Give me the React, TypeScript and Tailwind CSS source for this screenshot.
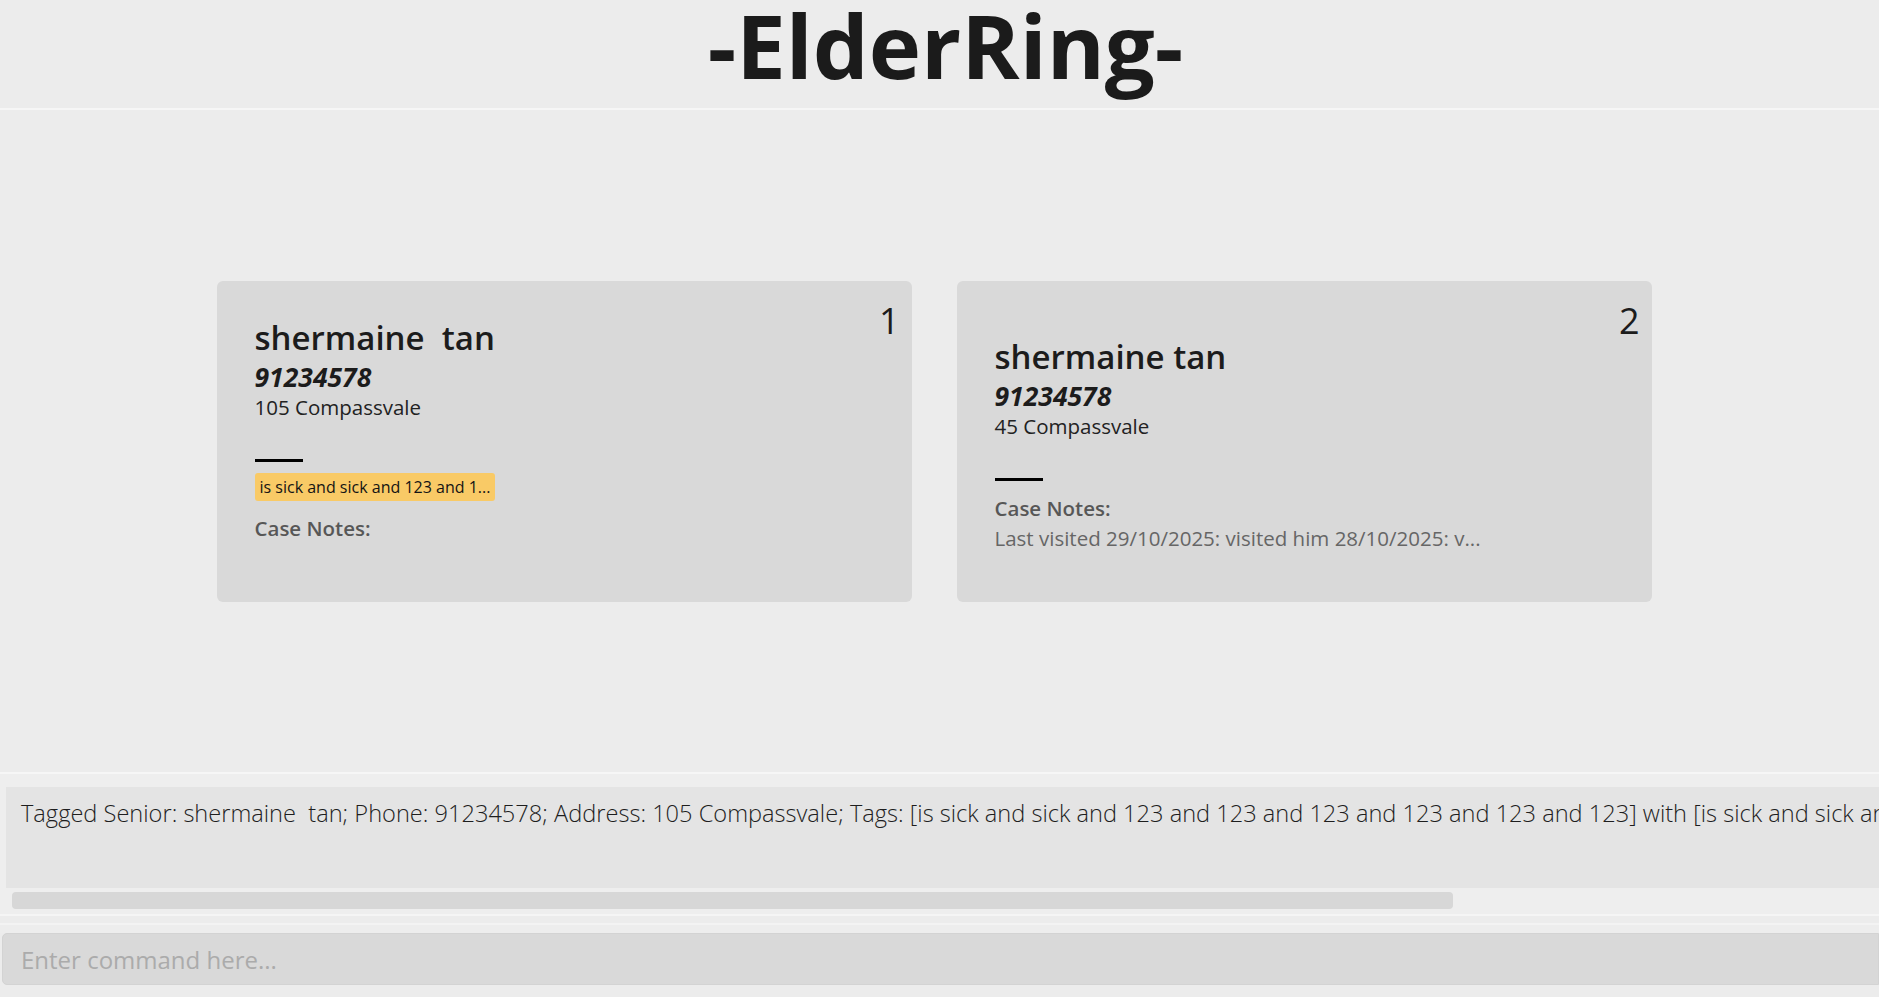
import React from "react";

type Person = {
  id: number;
  name: string;
  phone: string;
  address: string;
  tag?: string;
  note?: string;
};

const people: Person[] = [
  { id: 1, name: "shermaine  tan", phone: "91234578", address: "105 Compassvale", tag: "is sick and sick and 123 and 1..." },
  { id: 2, name: "shermaine tan", phone: "91234578", address: "45 Compassvale", note: "Last visited 29/10/2025: visited him 28/10/2025: v..." },
];

function Card({ p }: { p: Person }) {
  return (
    <div className="flex h-[321px] w-[695px] shrink-0 rounded-[6px] bg-[#d9d9d9] pl-[38px] pr-[12px]">
      <div className="flex flex-1 flex-col justify-center pt-[8px]">
        <div className="whitespace-pre text-[33px] font-semibold leading-[42px] text-[#1c1c1c]">{p.name}</div>
        <div className="text-[26.5px] font-bold italic leading-[37px] text-[#1c1c1c]">{p.phone}</div>
        <div className="text-[20.5px] leading-[23px] text-[#222222]">{p.address}</div>
        <div className="mt-[40px] h-[3px] w-[48px] bg-black" />
        {p.tag && (
          <div className="mt-[11px] flex">
            <div className="flex h-[28px] items-center rounded-[3px] bg-[#f9ca66] px-[5px] text-[16px] leading-[20px] text-[#141414]">
              {p.tag}
            </div>
          </div>
        )}
        <div className="mt-[13px] text-[20.5px] font-semibold leading-[28px] text-[#575757]">Case Notes:</div>
        <div className="h-[32px] whitespace-nowrap text-[20.5px] leading-[32px] text-[#666666]">{p.note ?? ""}</div>
      </div>
      <div className="pt-[22px] text-[36px] leading-none text-[#1c1c1c]">{p.id}</div>
    </div>
  );
}

export default function App() {
  const result =
    "Tagged Senior: shermaine  tan; Phone: 91234578; Address: 105 Compassvale; Tags: [is sick and sick and 123 and 123 and 123 and 123 and 123 and 123] with [is sick and sick and 123 and 123 and 123 and 123 and 123 and 123]";
  return (
    <div className="flex h-screen w-full flex-col overflow-hidden bg-[#ececec] font-['Open_Sans',sans-serif]">
      <div className="flex h-[108px] shrink-0 justify-center pl-[12px]">
        <h1 className="text-[88.5px] font-bold leading-[90px] text-[#1b1b1b]">-ElderRing-</h1>
      </div>
      <div className="h-[2px] shrink-0 bg-[#f6f6f6]" />
      <div className="flex flex-1 items-center justify-center gap-[45px] pr-[11px]">
        {people.map((p) => (
          <Card key={p.id} p={p} />
        ))}
      </div>
      <div className="h-[2px] shrink-0 bg-[#f6f6f6]" />
      <div className="h-[140px] shrink-0 bg-[#eeeeee] pl-[6px] pt-[13px]">
        <div className="h-[101px] overflow-hidden bg-[#e4e4e4] pl-[15px] pt-[10px]">
          <div className="whitespace-pre text-[23.6px] font-light leading-[32px] text-[#1e1e1e]">{result}</div>
        </div>
        <div className="h-[26px] pt-[4px]">
          <div className="ml-[6px] h-[17px] w-[1441px] rounded-[4px] bg-[#d7d7d7]" />
        </div>
      </div>
      <div className="h-[2px] shrink-0 bg-[#f5f5f5]" />
      <div className="h-[7px] shrink-0 bg-[#ececec]" />
      <div className="h-[2px] shrink-0 bg-[#f3f3f3]" />
      <div className="h-[8px] shrink-0 bg-[#ededed]" />
      <div className="h-[52px] shrink-0 pl-[2px]">
        <input
          className="h-full w-full rounded-l-[5px] border border-[#d3d3d3] bg-[#d9d9d9] pl-[18px] text-[24px] text-[#1e1e1e] outline-none placeholder:text-[#ababab]"
          placeholder="Enter command here..."
        />
      </div>
      <div className="h-[12px] shrink-0 bg-[#ececec]" />
    </div>
  );
}
